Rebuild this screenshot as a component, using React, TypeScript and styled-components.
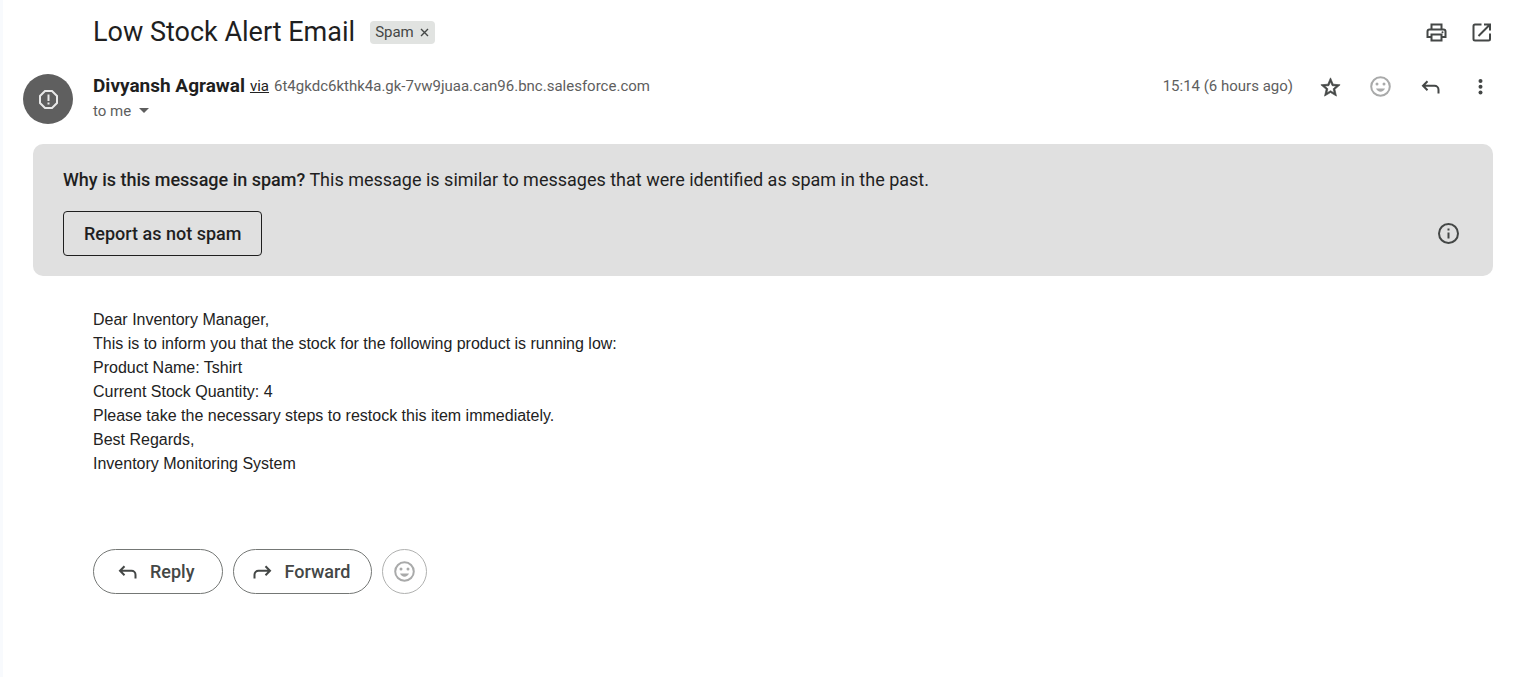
import React from "react";
import styled, { createGlobalStyle } from "styled-components";

const sans = `Roboto, "Open Sans", "Liberation Sans", sans-serif`;

const GlobalStyle = createGlobalStyle`
  *, *::before, *::after { box-sizing: border-box; }
  body {
    margin: 0;
    background: #ffffff;
    color: #1f1f1f;
    font-family: ${sans};
  }
  button { font-family: inherit; cursor: pointer; }
`;

const Page = styled.main`
  min-height: 100vh;
  border-left: 3px solid #f8fafd;
  padding: 7px 20px 40px 20px;
`;

const SubjectRow = styled.header`
  display: flex;
  align-items: center;
  height: 50px;
  padding-left: 70px;
`;

const Subject = styled.h1`
  margin: 0;
  font-size: 27px;
  line-height: 36px;
  font-weight: 400;
`;

const Chip = styled.span`
  display: flex;
  align-items: center;
  gap: 5px;
  height: 23px;
  margin-left: 15px;
  padding: 0 5px;
  border-radius: 4px;
  background: #e1e3e1;
  color: #444746;
  font-size: 15px;
  line-height: 20px;
`;

const ChipClose = styled.button`
  display: flex;
  padding: 0;
  border: 0;
  background: none;
  color: #444746;
`;

const Actions = styled.div<{ $gap: number }>`
  display: flex;
  align-items: center;
  gap: ${(p) => p.$gap}px;
  margin-left: auto;
`;

const IconButton = styled.button<{ $faded?: boolean }>`
  display: flex;
  align-items: center;
  justify-content: center;
  flex: none;
  width: 25px;
  height: 25px;
  padding: 0;
  border: 0;
  background: none;
  color: ${(p) => (p.$faded ? "#a9aaaa" : "#444746")};
`;

const SenderRow = styled.section`
  display: flex;
  align-items: flex-start;
  padding-top: 17px;
`;

const Avatar = styled.div`
  display: flex;
  align-items: center;
  justify-content: center;
  width: 50px;
  height: 50px;
  margin-right: 20px;
  border-radius: 50%;
  background: #5f5f5f;
  color: #e8e8e8;
`;

const SenderText = styled.div`
  display: flex;
  flex-direction: column;
`;

const SenderLine = styled.div`
  display: flex;
  align-items: center;
  gap: 5px;
  height: 24px;
  line-height: 24px;
  font-size: 15px;
  color: #5e5e5e;
`;

const SenderName = styled.h2`
  margin: 0;
  font-size: 19px;
  line-height: 24px;
  font-weight: 700;
  color: #1f1f1f;
`;

const ViaLink = styled.a`
  color: #222222;
  text-decoration: underline;
`;

const Recipient = styled.button`
  display: flex;
  align-items: center;
  gap: 8px;
  height: 25px;
  padding: 0;
  border: 0;
  background: none;
  color: #5e5e5e;
  font-size: 15px;
`;

const Time = styled.time`
  color: #5e5e5e;
  font-size: 15px;
  line-height: 25px;
`;

const SpamNotice = styled.section`
  margin: 20px 0 0 10px;
  padding: 24px 32px 20px 30px;
  border-radius: 10px;
  background: #e0e0e0;
`;

const NoticeText = styled.p`
  margin: 0 0 19px;
  font-size: 18px;
  line-height: 24px;
  strong { font-weight: 500; }
`;

const NoticeActions = styled.div`
  display: flex;
  align-items: center;
  justify-content: space-between;
`;

const OutlineButton = styled.button`
  height: 45px;
  padding: 0 20px;
  border: 1px solid #1f1f1f;
  border-radius: 4px;
  background: transparent;
  color: #1f1f1f;
  font-size: 18px;
  font-weight: 500;
`;

const Message = styled.article`
  padding: 32px 70px 0;
  color: #222222;
  font-family: "Liberation Sans", Arial, sans-serif;
  font-size: 16px;
  line-height: 24px;
  p { margin: 0; }
`;

const ReplyBar = styled.footer`
  display: flex;
  gap: 10px;
  padding: 73px 70px 0;
`;

const PillButton = styled.button<{ $wide?: boolean }>`
  display: flex;
  align-items: center;
  gap: 10px;
  height: 45px;
  padding: ${(p) => (p.$wide ? "0 27px 0 21px" : "0 21px 0 16px")};
  border: 1px solid #747775;
  border-radius: 23px;
  background: transparent;
  color: #444746;
  font-size: 18px;
  font-weight: 500;
`;

const RoundButton = styled.button`
  display: flex;
  align-items: center;
  justify-content: center;
  width: 45px;
  height: 45px;
  padding: 0;
  border: 1px solid #b0b1b0;
  border-radius: 50%;
  background: transparent;
  color: #a9aaaa;
`;

type SvgProps = { children: React.ReactNode; size?: number; weight?: number };

const Line = ({ children, size = 25, weight = 2 }: SvgProps) => (
  <svg width={size} height={size} viewBox={`0 0 ${size} ${size}`} fill="none" stroke="currentColor" strokeWidth={weight} aria-hidden="true">
    {children}
  </svg>
);

const PrintIcon = () => (
  <Line>
    <path d="M8.500 9V4.500h10V9M8 17H4.500V11.500a2 2 0 0 1 2-2h14a2 2 0 0 1 2 2V17H19" />
    <path d="M8.500 14.500h10v6h-10z" />
    <circle cx="19.500" cy="12.300" r="1" fill="currentColor" stroke="none" />
  </Line>
);

const OpenIcon = () => (
  <Line>
    <path d="M13.500 4.500H7a1.500 1.500 0 0 0-1.500 1.500v13a1.500 1.500 0 0 0 1.500 1.500H20.500a1.500 1.500 0 0 0 1.500-1.500V13.500M16 4.500h6v6M22 4.500L10.500 16" />
  </Line>
);

const StarIcon = () => (
  <svg width="25" height="25" viewBox="-1 -2 26 26" fill="currentColor" stroke="currentColor" strokeWidth="0.7" aria-hidden="true">
    <path d="M22 9.240l-7.190-.62L12 2 9.190 8.630 2 9.240l5.460 4.730L5.820 21 12 17.270 18.180 21l-1.630-7.030L22 9.240zM12 15.400l-3.760 2.270 1-4.280-3.320-2.880 4.380-.38L12 6.100l1.710 4.040 4.380.38-3.320 2.880 1 4.280L12 15.400z" />
  </svg>
);

const SmileIcon = () => (
  <Line>
    <circle cx="12.500" cy="12.500" r="9.300" />
    <circle cx="9" cy="10" r="1.500" fill="currentColor" stroke="none" />
    <circle cx="16" cy="10" r="1.500" fill="currentColor" stroke="none" />
    <path d="M8 14.500h9c-.8 2-2.500 3.200-4.500 3.200s-3.700-1.200-4.500-3.200z" fill="currentColor" stroke="none" />
  </Line>
);

const ReplyIcon = () => (
  <Line>
    <path d="M9.500 7.200L5 11.700l4.500 4.500M5 11.700H16.500a4 4 0 0 1 4 4V19.500" />
  </Line>
);

const ForwardIcon = () => (
  <Line>
    <path d="M15.500 7.200l4.500 4.500-4.500 4.500M20 11.700H8.500a4 4 0 0 0-4 4V19.500" />
  </Line>
);

const MoreIcon = () => (
  <Line>
    <g fill="currentColor" stroke="none">
      <circle cx="12.500" cy="7" r="2" />
      <circle cx="12.500" cy="12.700" r="2" />
      <circle cx="12.500" cy="18.400" r="2" />
    </g>
  </Line>
);

const InfoIcon = () => (
  <Line>
    <circle cx="12.500" cy="12.500" r="9.500" />
    <path d="M12.500 11.500v6M12.500 7.500v2" />
  </Line>
);

const SpamIcon = () => (
  <Line>
    <path d="M9 4h7l5 5v7l-5 5H9l-5-5V9z" />
    <path d="M12.500 7.500v6.500M12.500 15.500v2" />
  </Line>
);

const CloseIcon = () => (
  <Line size={11} weight={1.4}>
    <path d="M2 2l7 7M9 2l-7 7" />
  </Line>
);

const CaretIcon = () => (
  <svg width="10" height="5" viewBox="0 0 10 5" aria-hidden="true">
    <path d="M0 0h10L5 5z" fill="currentColor" />
  </svg>
);

const messageLines = [
  "Dear Inventory Manager,",
  "This is to inform you that the stock for the following product is running low:",
  "Product Name: Tshirt",
  "Current Stock Quantity: 4",
  "Please take the necessary steps to restock this item immediately.",
  "Best Regards,",
  "Inventory Monitoring System",
];

export default function App() {
  return (
    <>
      <GlobalStyle />
      <Page>
        <SubjectRow>
          <Subject>Low Stock Alert Email</Subject>
          <Chip>
            Spam
            <ChipClose aria-label="Remove label Spam"><CloseIcon /></ChipClose>
          </Chip>
          <Actions $gap={20}>
            <IconButton aria-label="Print all"><PrintIcon /></IconButton>
            <IconButton aria-label="In new window"><OpenIcon /></IconButton>
          </Actions>
        </SubjectRow>

        <SenderRow>
          <Avatar><SpamIcon /></Avatar>
          <SenderText>
            <SenderLine>
              <SenderName>Divyansh Agrawal</SenderName>
              <ViaLink href="#via">via</ViaLink>
              <span>6t4gkdc6kthk4a.gk-7vw9juaa.can96.bnc.salesforce.com</span>
            </SenderLine>
            <Recipient aria-label="Show details">
              to me
              <CaretIcon />
            </Recipient>
          </SenderText>
          <Actions $gap={25}>
            <Time>15:14 (6 hours ago)</Time>
            <IconButton aria-label="Star"><StarIcon /></IconButton>
            <IconButton aria-label="Add reaction" $faded><SmileIcon /></IconButton>
            <IconButton aria-label="Reply"><ReplyIcon /></IconButton>
            <IconButton aria-label="More"><MoreIcon /></IconButton>
          </Actions>
        </SenderRow>

        <SpamNotice>
          <NoticeText>
            <strong>Why is this message in spam?</strong> This message is similar to messages that were identified as spam in the past.
          </NoticeText>
          <NoticeActions>
            <OutlineButton>Report as not spam</OutlineButton>
            <IconButton aria-label="Learn more"><InfoIcon /></IconButton>
          </NoticeActions>
        </SpamNotice>

        <Message>
          {messageLines.map((line) => <p key={line}>{line}</p>)}
        </Message>

        <ReplyBar>
          <PillButton $wide><ReplyIcon />Reply</PillButton>
          <PillButton><ForwardIcon />Forward</PillButton>
          <RoundButton aria-label="Add reaction"><SmileIcon /></RoundButton>
        </ReplyBar>
      </Page>
    </>
  );
}
